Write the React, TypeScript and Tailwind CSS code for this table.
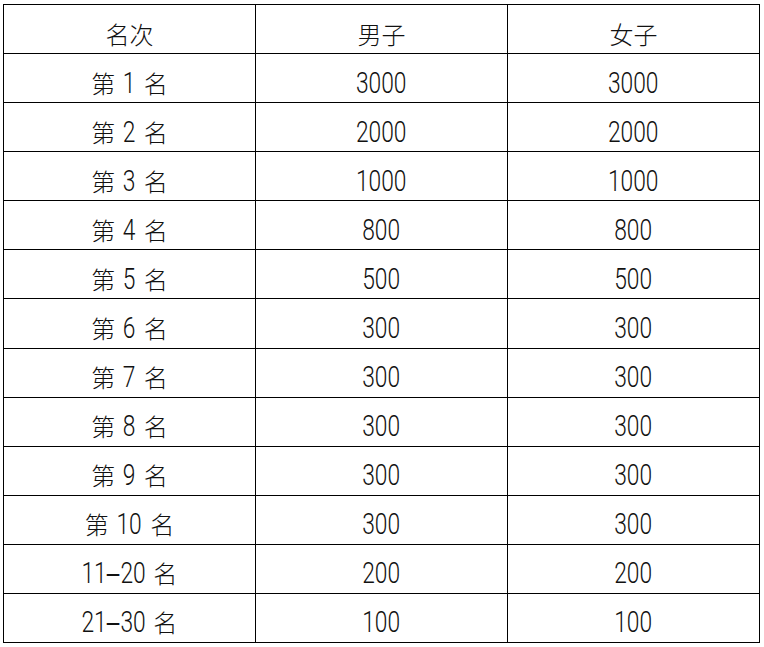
import React from "react";

// Prize table: rank / men / women
const rows: [string, string, string][] = [
  ["名次", "男子", "女子"],
  ["第 1 名", "3000", "3000"],
  ["第 2 名", "2000", "2000"],
  ["第 3 名", "1000", "1000"],
  ["第 4 名", "800", "800"],
  ["第 5 名", "500", "500"],
  ["第 6 名", "300", "300"],
  ["第 7 名", "300", "300"],
  ["第 8 名", "300", "300"],
  ["第 9 名", "300", "300"],
  ["第 10 名", "300", "300"],
  ["11–20 名", "200", "200"],
  ["21–30 名", "100", "100"],
];

// split into CJK runs, spaces, dashes and digit runs
const token = /([\u4e00-\u9fff]+|\s+|–)/;
const isCjk = /^[\u4e00-\u9fff]+$/;

function CellText({ text }: { text: string }) {
  return (
    <span className="whitespace-pre leading-none">
      {text.split(token).filter(Boolean).map((part, i) => {
        if (isCjk.test(part)) {
          return (
            <span
              key={i}
              className="text-[24px] font-light [font-family:'Noto_Sans_CJK_SC',sans-serif]"
            >
              {part}
            </span>
          );
        }
        if (/^\s+$/.test(part)) {
          return (
            <span key={i} className="text-[29px] [font-family:'Liberation_Sans',sans-serif]">
              {part}
            </span>
          );
        }
        if (part === "–") {
          return (
            <span
              key={i}
              className="mx-[-1.5px] inline-block origin-center scale-x-[0.78] text-[29px] [font-family:'Liberation_Sans',sans-serif]"
            >
              {part}
            </span>
          );
        }
        // narrow digits: squeeze horizontally, pull in the unused width
        const pull = -(part.length * 16.3 * 0.215) / 2;
        return (
          <span
            key={i}
            className="inline-block origin-center scale-x-[0.785] text-[29px] font-light [font-family:Roboto,'Liberation_Sans',sans-serif]"
            style={{ marginLeft: pull, marginRight: pull }}
          >
            {part}
          </span>
        );
      })}
    </span>
  );
}

export default function App() {
  return (
    <div className="w-[764px] h-[647px] bg-white pl-[3px] pt-[4px]">
      <div className="grid w-[757px] h-[639px] grid-cols-3 grid-rows-13 gap-px bg-black p-px">
        {rows.flatMap((row, r) =>
          row.map((cell, c) => (
            <div
              key={`${r}-${c}`}
              className="flex items-center justify-center bg-white pt-[10px] text-[#111]"
            >
              <CellText text={cell} />
            </div>
          ))
        )}
      </div>
    </div>
  );
}
